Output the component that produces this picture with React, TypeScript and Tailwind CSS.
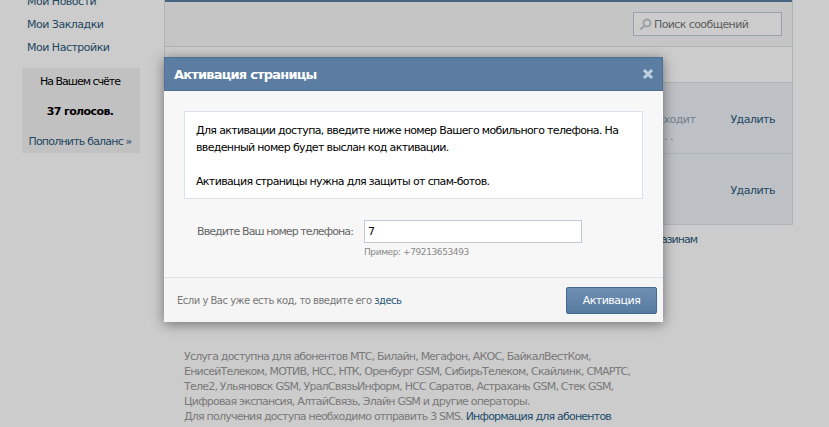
const font = "font-['DejaVu_Sans',sans-serif] tracking-[-0.5px] leading-[13px]";

function Sidebar() {
  return (
    <div className="w-[164px] shrink-0 pl-[27px] text-[11px] text-[#2b587a]">
      <div className="-mt-[10px] flex flex-col">
        <a className="h-[23px] leading-[23px]">Мои Новости</a>
        <a className="h-[23px] leading-[23px]">Мои Закладки</a>
        <a className="h-[23px] leading-[23px]">Мои Настройки</a>
      </div>
      <div className="mt-[9px] -ml-[5px] flex h-[85px] w-[118px] flex-col items-center bg-[#f2f2f2] pr-[2px] pt-[7px]">
        <div className="tracking-[-1px] text-black">На Вашем счёте</div>
        <div className="mt-[17px] font-bold tracking-[-0.6px] text-black">37 голосов.</div>
        <a className="mt-[17px] tracking-[-0.8px]">Пополнить баланс »</a>
      </div>
    </div>
  );
}

function MessageRow({note}: {note?: boolean}) {
  return (
    <div className="flex h-[71px] items-start justify-end border-b border-[#dae1e8] bg-[#edf1f5] pr-[17px] pt-[30px] text-[11px]">
      {note && (
        <div className="mr-[35px] flex flex-col text-[#8fa1b3]">
          <span>сходит</span>
          <span className="mt-[4px] pl-[6px]">. .</span>
        </div>
      )}
      <a className="text-[#2b587a]">Удалить</a>
    </div>
  );
}

function Content() {
  return (
    <div className="w-[629px] shrink-0">
      <div className="h-[225px] border-x border-b border-[#dae1e8]">
        <div className="flex h-[47px] items-start justify-end border-t-2 border-b border-t-[#597da3] border-b-[#dae1e8] bg-[#f7f7f7] pr-[10px] pt-[10px]">
          <div className="flex h-[24px] w-[149px] items-center gap-[2px] border border-[#c0cad5] bg-white pl-[5px] text-[11px] tracking-[-0.6px] text-[#777]">
            <svg width="13" height="13" viewBox="0 0 13 13" fill="none">
              <circle cx="8" cy="5" r="3.5" stroke="#c4c8cd" strokeWidth="2" />
              <path d="M5 8 1.5 11.5" stroke="#c4c8cd" strokeWidth="2.4" />
            </svg>
            Поиск сообщений
          </div>
        </div>
        <div className="h-[36px] border-b border-[#dae1e8] bg-white" />
        <MessageRow note />
        <MessageRow />
      </div>
      <div className="mt-[8px] pl-[497px] text-[11px] tracking-[-1px] text-[#2b587a]">азинам</div>
      <div className="ml-[20px] mt-[103px] whitespace-nowrap text-[11px] leading-[15px] tracking-[-0.78px] text-[#999]">
        Услуга доступна для абонентов МТС, Билайн, Мегафон, АКОС, БайкалВестКом,
        <br />
        ЕнисейТелеком, МОТИВ, НСС, НТК, Оренбург GSM, СибирьТелеком, Скайлинк, СМАРТС,
        <br />
        Теле2, Ульяновск GSM, УралСвязьИнформ, НСС Саратов, Астрахань GSM, Стек GSM,
        <br />
        Цифровая экспансия, АлтайСвязь, Элайн GSM и другие операторы.
        <br />
        Для получения доступа необходимо отправить 3 SMS.{" "}
        <a className="text-[#2b5f8a]">Информация для абонентов</a>
      </div>
    </div>
  );
}

function Dialog() {
  return (
    <div className="absolute left-[164px] top-[57px] w-[499px] shadow-[0_2px_12px_rgba(0,0,0,0.45)]">
      <div className="flex h-[34px] items-center justify-between border border-[#4d7094] bg-[#5b7da2] pl-[9px] pr-[8px] text-[13px] font-bold tracking-[-0.8px] text-white">
        <span>Активация страницы</span>
        <svg width="12" height="12" viewBox="0 0 12 12">
          <path d="M2 2 10 10M10 2 2 10" stroke="#c1d1e2" strokeWidth="3" />
        </svg>
      </div>
      <div className="h-[186px] bg-[#f7f7f7] px-[20px] pt-[20px]">
        <div className="h-[88px] whitespace-nowrap border border-[#dae1e8] bg-white pl-[11px] pt-[10px] text-[11px] leading-[17px] tracking-[-0.65px] text-black">
          Для активации доступа, введите ниже номер Вашего мобильного телефона. На
          <br />
          введенный номер будет выслан код активации.
          <br />
          <br />
          Активация страницы нужна для защиты от спам-ботов.
        </div>
        <div className="mt-[21px] flex items-center">
          <span className="w-[180px] whitespace-nowrap pr-[11px] text-right text-[11px] tracking-[-0.9px] text-[#666]">Введите Ваш номер телефона:</span>
          <div className="flex h-[23px] w-[218px] items-center border border-[#c0cad5] bg-white pl-[3px] text-[11px] text-black">7</div>
        </div>
        <div className="mt-[3px] pl-[180px] text-[9px] tracking-[-0.4px] text-[#888]">Пример: +79213653493</div>
      </div>
      <div className="flex h-[45px] items-center justify-between border-t border-[#dae1e8] bg-[#f5f5f5] pl-[13px] pr-[6px] text-[10px] text-[#777]">
        <span>
          Если у Вас уже есть код, то введите его <a className="text-[#2b587a]">здесь</a>
        </span>
        <button className="h-[27px] w-[91px] rounded-[2px] border border-[#45688e] bg-linear-to-b from-[#6f90b3] to-[#567ba0] text-[11px] text-white">Активация</button>
      </div>
    </div>
  );
}

export default function App() {
  return (
    <div className={`relative h-[427px] w-[829px] overflow-hidden bg-white ${font}`}>
      <div className="flex">
        <Sidebar />
        <Content />
      </div>
      <div className="absolute inset-0 bg-black/20" />
      <Dialog />
    </div>
  );
}
